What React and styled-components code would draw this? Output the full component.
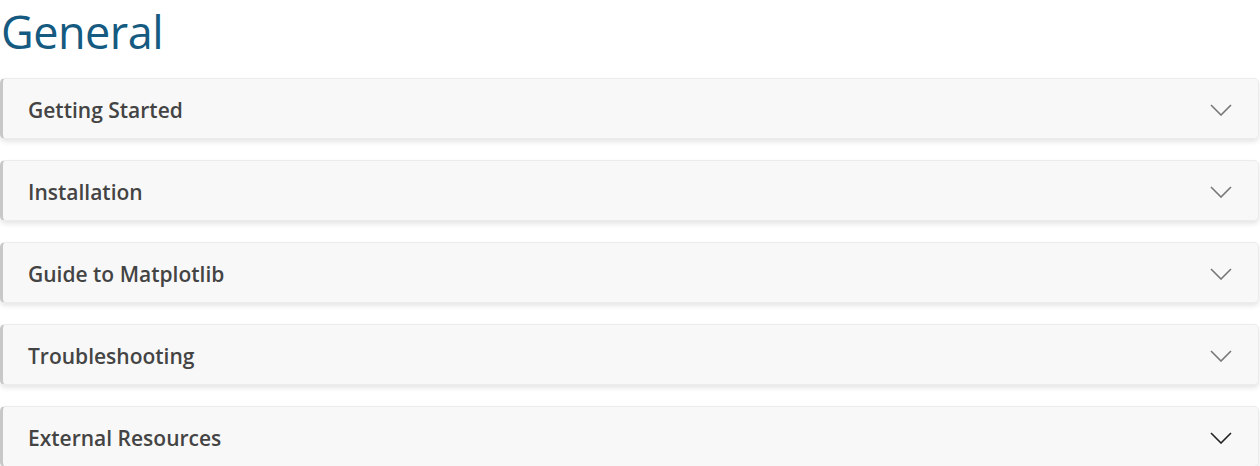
import React from "react";
import styled, { createGlobalStyle } from "styled-components";

const Global = createGlobalStyle`
  body {
    margin: 0;
    background: #fff;
    font-family: "Open Sans", "Noto Sans", sans-serif;
  }
`;

const sections = [
  "Getting Started",
  "Installation",
  "Guide to Matplotlib",
  "Troubleshooting",
  "External Resources",
];

const Chevron = ({ dark }) => (
  <svg width="22" height="12" viewBox="0 0 22 12" fill="none">
    <path
      d="M1 1 L11 11 L21 1"
      stroke={dark ? "#222" : "#777"}
      strokeWidth="1.6"
    />
  </svg>
);

const App = () => {
  return (
    <Page>
      <Global />
      <Title>General</Title>
      <List>
        {sections.map((s, i) => (
          <Card key={s}>
            <Label>{s}</Label>
            <Chevron dark={i === sections.length - 1} />
          </Card>
        ))}
      </List>
    </Page>
  );
};
export default App;

const Page = styled.div`
  width: 1260px;
  padding-right: 1px;
  box-sizing: border-box;
`;

const Title = styled.h1`
  margin: 0;
  padding: 2px 0 0 1px;
  height: 76px;
  box-sizing: border-box;
  font-family: "Open Sans", "Noto Sans", sans-serif;
  font-weight: 400;
  font-size: 45px;
  line-height: 60px;
  color: #155a80;
  letter-spacing: -0.5px;
`;

const List = styled.div`
  display: flex;
  flex-direction: column;
  gap: 21px;
  padding-top: 2px;
`;

const Card = styled.div`
  height: 61px;
  box-sizing: border-box;
  display: flex;
  align-items: center;
  justify-content: space-between;
  padding: 2px 26px 0 25px;
  background: #f8f8f8;
  border: 1px solid #ececec;
  border-left: 3px solid #c8c8c8;
  border-radius: 5px;
  box-shadow: 0 3px 5px rgba(0, 0, 0, 0.1);
`;

const Label = styled.span`
  font-size: 21px;
  font-weight: 600;
  color: #444;
  letter-spacing: 0;
`;
